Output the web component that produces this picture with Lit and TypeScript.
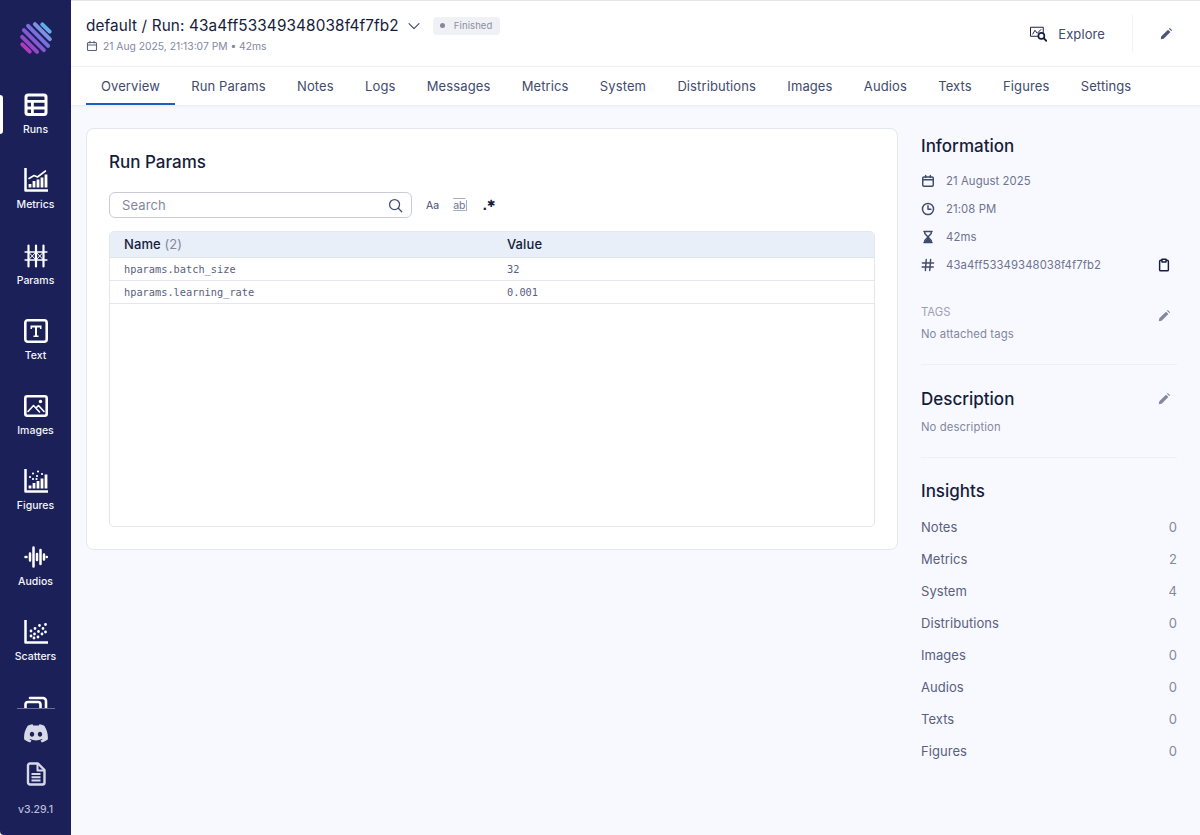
import { LitElement, html, css, svg } from "lit";
import { customElement } from "lit/decorators.js";

const I = (c: unknown, s = 24, vb = "0 0 24 24", cls = "") =>
  html`<svg class=${cls} width=${s} height=${s} viewBox=${vb} fill="none" stroke="currentColor" stroke-width="2" stroke-linecap="round" stroke-linejoin="round">${c}</svg>`;

const icons = {
  runs: svg`<rect x="0.5" y="0.5" width="23" height="22.500" rx="3.500" fill="currentColor" stroke="none"/><path d="M3.500 7h17V4.300a.8.8 0 0 0-.8-.8H4.300a.8.8 0 0 0-.8.8z M3.500 9.800h3.500v3.800H3.500z M9.800 9.800h10.700v3.800H9.800z M3.500 16.400h3.500v3.600H4.300a.8.8 0 0 1-.8-.8z M9.800 16.400h10.700v2.800a.8.8 0 0 1-.8.8H9.800z" fill="#1b2059" stroke="none"/>`,
  metrics: svg`<path d="M1.500 1v21.500H23.500" stroke-width="2.500" stroke-linecap="square"/><path d="M6 19.500V16M10 19.500V13M14 19.500V11.500M18 19.500V9.500M22 19.500V6.500" stroke-width="2.800" stroke-linecap="butt"/><path d="M5 10.500l5-3 3.500 1.500 8-6" stroke-width="1.600"/>`,
  params: svg`<path d="M4.500 1.500v21M12 1.500v21M19.500 1.500v21" stroke-width="2.200"/><path d="M1 8h22M1 16h22" stroke-width="1.300"/><path d="M4.500 8l7.500 8 7.500-8M4.500 16l7.500-8 7.500 8" stroke-width="1"/>`,
  text: svg`<rect x="1.300" y="1.300" width="21.400" height="21.400" rx="2.500" stroke-width="2.600"/><path d="M6.500 6.500h11v3.500h-1.500V8.500h-3v8h1.500V18h-5v-1.500h1.500v-8H8v1.500H6.500z" fill="currentColor" stroke="none"/>`,
  images: svg`<rect x="1.300" y="2.300" width="21.400" height="19.400" rx="2" stroke-width="2.600"/><circle cx="16.500" cy="7.500" r="1.700" fill="currentColor" stroke="none"/><path d="M4 17.500l5.500-6L15.500 18M12 14l2.500-2.500 5.500 6" stroke-width="1.600"/>`,
  figures: svg`<path d="M1.500 1v21.500H23.500" stroke-width="2.500" stroke-linecap="square"/><path d="M6 19.500V16.500M10 19.500V14M14 19.500V12M18 19.500V9.500M22 19.500V5.500" stroke-width="2.800" stroke-linecap="butt"/><path d="M6 8h.01M9 4.500h.01M9 10h.01M13 7h.01M14 2.500h.01M18 5h.01M12.500 10h.01" stroke-width="2.200"/>`,
  audios: svg`<path d="M1.500 12h1M6 8.500v7M9.500 2.500v19M13 9v6M16.500 5v14M20 9.500v5M22.800 12h.01" stroke-width="2.500"/>`,
  scatters: svg`<path d="M1.500 1v21.500H23.500" stroke-width="2.500" stroke-linecap="square"/><path d="M7 16h.01M7 11h.01M10.500 14h.01M11 8.500h.01M14 17h.01M14.500 11.500h.01M15.500 5.500h.01M18 14h.01M19 8.500h.01M21.500 4.500h.01M10 18h.01M21.500 12h.01" stroke-width="2.800"/>`,
  stack: svg`<rect x="1.500" y="7" width="15" height="15" rx="2.500" stroke-width="2.600"/><path d="M6 3h13a3 3 0 0 1 3 3v12" stroke-width="2.600"/>`,
  cal: svg`<rect x="3" y="5" width="18" height="16" rx="2"/><path d="M3 10h18M8 2.500V6M16 2.500V6"/>`,
  clock: svg`<circle cx="12" cy="12" r="9.500"/><path d="M12 6.500V12.500H17"/>`,
  glass: svg`<path d="M5 2.500h14M5 21.500h14M6.500 2.500v3.500L12 12l5.500-6V2.500M6.500 21.500V18L12 12l5.500 6v3.500"/><path d="M8 19.500l4-4 4 4z" fill="currentColor"/>`,
  hash: svg`<path d="M9 2.500L7.500 21.500M16.500 2.500L15 21.500M2.500 8.500h19M2 15.500h19"/>`,
  clip: svg`<rect x="4.500" y="4" width="15" height="18" rx="2"/><path d="M8.500 2h7v5h-7z" fill="#f8f9fe"/>`,
  pen: svg`<path d="M3 21l1-5L15.500 4.500l4 4L8 20z M17 3l1.500-1.500 4 4L21 7z" fill="currentColor" stroke="none"/>`,
  search: svg`<circle cx="10.500" cy="10.500" r="8"/><path d="M16.500 16.500L22 22"/>`,
  chev: svg`<path d="M3.500 8l8.500 8.500L20.500 8"/>`,
  doc: svg`<path d="M6 1.500h8l6.500 6.500v12.500a2 2 0 0 1-2 2H6a2 2 0 0 1-2-2V3.500a2 2 0 0 1 2-2z" stroke-width="2.400"/><path d="M13.500 2V8.500H20" stroke-width="2"/><path d="M7.500 12h9M7.500 15.200h9M7.500 18.400h9" stroke-width="2" stroke-linecap="butt"/>`,
  discord: svg`<path d="M20.300 4.800A19.600 19.600 0 0 0 15.400 3.300l-.6 1.300a18 18 0 0 0-5.600 0l-.6-1.300a19.600 19.600 0 0 0-4.900 1.500C.6 9.500-.3 14 .2 18.500a19.800 19.800 0 0 0 6 3l1.300-2.100-2-1 .5-.4a14 14 0 0 0 12 0l.5.400-2 1 1.300 2.100a19.800 19.800 0 0 0 6-3c.5-5.200-.9-9.700-3.500-13.700zM8 15.800c-1.200 0-2.200-1.100-2.200-2.500S6.800 10.800 8 10.800s2.200 1.100 2.200 2.500-1 2.500-2.200 2.500zm8 0c-1.200 0-2.200-1.100-2.200-2.500s1-2.500 2.200-2.500 2.200 1.100 2.200 2.500-1 2.500-2.200 2.500z" fill="currentColor" stroke="none"/>`,
  explore: svg`<path d="M14 15H2V3h17v7" stroke-width="1.300"/><path d="M5 12l3-5 3 4 5-5" stroke-width="1.300"/><circle cx="16.500" cy="14.500" r="4" stroke-width="2.200" fill="#fff"/><path d="M19.500 17.500l3.500 3.500" stroke-width="2.400"/>`,
};

const navItems: [string, keyof typeof icons][] = [
  ["Runs", "runs"], ["Metrics", "metrics"], ["Params", "params"], ["Text", "text"],
  ["Images", "images"], ["Figures", "figures"], ["Audios", "audios"], ["Scatters", "scatters"], ["", "stack"],
];
const tabs = ["Overview", "Run Params", "Notes", "Logs", "Messages", "Metrics", "System", "Distributions", "Images", "Audios", "Texts", "Figures", "Settings"];
const insights: [string, number][] = [["Notes", 0], ["Metrics", 2], ["System", 4], ["Distributions", 0], ["Images", 0], ["Audios", 0], ["Texts", 0], ["Figures", 0]];

@customElement("app-root")
export class AppRoot extends LitElement {
  static styles = css`
    :host { display: block; width: 1200px; height: 835px; overflow: hidden; font-family: Inter, "Noto Sans", sans-serif; background: #fff; color: #414b6d; }
    * { box-sizing: border-box; }
    .shell { display: flex; height: 835px; }
    .side { width: 71px; flex: none; background: #1b2059; color: #fff; display: flex; flex-direction: column; align-items: center; border-bottom-left-radius: 4px; }
    .logo { height: 66px; padding-top: 20px; flex: none; }
    .nav { width: 100%; height: 642px; flex: none; overflow: hidden; }
    .item { height: 75.300px; position: relative; display: flex; flex-direction: column; align-items: center; padding-top: 27px; gap: 6px; }
    .item span { font-size: 10.500px; font-weight: 500; line-height: 13px; color: #f4f5fa; }
    .item.active::before { content: ""; position: absolute; left: 0; top: 28.500px; width: 3px; height: 39px; background: #fff; border-radius: 0 3px 3px 0; }
    .line { width: 38px; height: 1px; background: #6a6f99; flex: none; }
    .bottom { display: flex; flex-direction: column; align-items: center; color: #d7d9e8; }
    .discord { margin-top: 12px; height: 24px; }
    .docicon { margin-top: 17px; height: 24px; }
    .ver { margin-top: 17px; font-size: 10.500px; font-weight: 500; color: #b9bdd6; line-height: 13px; }
    .main { flex: 1; min-width: 0; display: flex; flex-direction: column; background: #f8f9fe; }
    .head { height: 67px; flex: none; background: #fff; border-top: 1px solid #e4e5e9; border-bottom: 1px solid #f1f3f8; display: flex; justify-content: space-between; padding: 0 27px 0 15px; }
    .title { padding-top: 14px; }
    .tline { display: flex; align-items: center; font-size: 15.300px; line-height: 21px; color: #161c3c; letter-spacing: 0.13px; white-space: pre; }
    .tline svg { margin-left: 8px; color: #414b6d; }
    .badge { margin-left: 12px; height: 18px; display: flex; align-items: center; gap: 9px; padding: 0 8px 0 7px; background: #f0f1f5; border-radius: 4px; font-size: 9.500px; color: #8a8fa6; letter-spacing: 0.1px; }
    .badge i { width: 5px; height: 5px; background: #83889f; border-radius: 50%; }
    .sub { display: flex; align-items: center; gap: 5px; margin-top: 3px; font-size: 10.300px; line-height: 14px; color: #83889f; }
    .sub svg { stroke-width: 2.200; color: #596080; }
    .actions { display: flex; align-items: center; }
    .explore { display: flex; align-items: center; gap: 11px; font-size: 13px; letter-spacing: 0.1px; color: #414b6d; padding-right: 27px; }
    .explore svg { color: #161c3c; }
    .pen { height: 37px; border-left: 1px solid #f1f3f8; padding-left: 26px; display: flex; align-items: center; color: #4c5573; }
    .tabs { height: 38px; flex: none; background: #fff; display: flex; gap: 1.350px; padding-left: 15px; box-shadow: 0 1px 3px rgba(30,40,90,.08); }
    .tab { padding: 0 15px; font-size: 13px; letter-spacing: 0.1px; line-height: 38px; color: #414b6d; height: 38px; border-bottom: 2px solid transparent; }
    .tab.active { border-bottom-color: #1c5fc4; }
    .body { flex: 1; display: flex; padding: 23px 23px 0 15px; gap: 23px; align-items: flex-start; }
    .card { width: 812px; height: 422px; flex: none; background: #fff; border: 1px solid #e4e7f0; border-radius: 8px; padding: 21px 22px 22px; display: flex; flex-direction: column; }
    h2 { margin: 0; font-weight: 500; font-size: 17px; line-height: 24px; color: #161c3c; }
    .tools { display: flex; align-items: center; margin-top: 18px; }
    .search { width: 303px; height: 26px; border: 1px solid #c9ccd6; border-radius: 6px; display: flex; align-items: center; justify-content: space-between; padding: 0 8px 0 12px; font-size: 13px; letter-spacing: 0.1px; color: #83889f; }
    .search svg { color: #414b6d; }
    .opts { display: flex; align-items: center; color: #414b6d; margin-left: 14px; gap: 13px; font-size: 10.500px; }
    .ab { font-size: 10.500px; color: #6d7390; text-decoration: underline overline; text-decoration-color: #a9adbf; border-right: 1px solid #a9adbf; line-height: 11px; padding: 0 1px; }
    .re { display: flex; align-items: flex-end; height: 12px; color: #161c3c; margin-left: 2px; font-family: "DejaVu Sans", sans-serif; }
    .re b { font-size: 12px; line-height: 10px; }
    .re i { font-style: normal; font-size: 10px; line-height: 15px; margin-left: 0; }
    .table { flex: 1; margin-top: 13px; border: 1px solid #e4e7f0; border-radius: 5px; overflow: hidden; }
    .row { display: grid; grid-template-columns: 383px 1fr; padding: 0 0 1px 14px; height: 23px; align-items: center; border-bottom: 1px solid #e4e7f0; font-family: "DejaVu Sans Mono", monospace; font-size: 10.300px; color: #596080; }
    .row.h { height: 26px; background: #e8eff8; font-family: Inter, sans-serif; font-size: 13px; font-weight: 500; letter-spacing: 0.1px; color: #161c3c; border-bottom: 1px solid #dfe3ec; }
    .row.h em { font-style: normal; font-weight: 400; color: #83889f; }
    .info { width: 256px; flex: none; margin-top: 7px; }
    .info h2 { line-height: 22px; margin-top: 0; }
    .meta { display: flex; align-items: center; gap: 11px; height: 28px; font-size: 11.300px; letter-spacing: 0.1px; color: #6d7390; }
    .meta svg { width: 14px; height: 14px; stroke-width: 2.500; color: #414b6d; flex: none; }
    .meta .clip { margin-left: 45px; display: flex; }
    .meta .clip svg { color: #161c3c; }
    .metas { margin-top: 10px; }
    .split { display: flex; justify-content: space-between; align-items: center; }
    .split svg { color: #83889f; margin-right: 6px; }
    .tags { margin-top: 26px; align-items: flex-start; font-size: 11.300px; line-height: 14px; color: #9ca0b4; }
    .tags svg { margin-top: 4px; }
    .note { font-size: 11.300px; line-height: 14px; color: #83889f; letter-spacing: 0.1px; margin-top: 4px; }
    .note.d { margin-top: 10px; }
    .rule { height: 1px; background: #eef0f6; margin: 23px 0 23px; }
    .rule.r2 { margin-bottom: 22px; }
    .ins { display: flex; justify-content: space-between; height: 32px; align-items: center; font-size: 13px; letter-spacing: 0.05px; color: #596080; }
    .ins b { font-weight: 400; color: #83889f; }
    .insl { margin-top: 9px; }
  `;

  render() {
    return html`<div class="shell">
      <aside class="side">
        <div class="logo">
          <svg width="36" height="36" viewBox="0 0 36 36" fill="none" stroke-linecap="round" stroke-width="4">
            <path d="M24.300 4.300L31.700 11.700" stroke="#62ade8"/>
            <path d="M16.900 4.100L31.900 19.100" stroke="#7f90e2"/>
            <path d="M10.100 5.900L30.100 25.900" stroke="#7870de"/>
            <path d="M5.900 10.100L25.900 30.100" stroke="#8359d4"/>
            <path d="M4.100 16.900L19.100 31.900" stroke="#9348c8"/>
            <path d="M4.300 24.300L11.700 31.700" stroke="#b03abd"/>
          </svg>
        </div>
        <nav class="nav">
          ${navItems.map(([n, ic], i) => html`<div class="item ${i === 0 ? "active" : ""}">${I(icons[ic])}${n ? html`<span>${n}</span>` : ""}</div>`)}
        </nav>
        <div class="line"></div>
        <div class="bottom">
          <div class="discord">${I(icons.discord, 24)}</div>
          <div class="docicon">${I(icons.doc, 24)}</div>
          <div class="ver">v3.29.1</div>
        </div>
      </aside>
      <div class="main">
        <header class="head">
          <div class="title">
            <div class="tline">default / Run: 43a4ff53349348038f4f7fb2${I(icons.chev, 14)}<div class="badge"><i></i>Finished</div></div>
            <div class="sub">${I(icons.cal, 12)}21 Aug 2025, 21:13:07 PM • 42ms</div>
          </div>
          <div class="actions">
            <div class="explore">${I(icons.explore, 18)}Explore</div>
            <div class="pen">${I(icons.pen, 14)}</div>
          </div>
        </header>
        <div class="tabs">${tabs.map((t, i) => html`<div class="tab ${i === 0 ? "active" : ""}">${t}</div>`)}</div>
        <div class="body">
          <section class="card">
            <h2>Run Params</h2>
            <div class="tools">
              <div class="search">Search${I(icons.search, 15)}</div>
              <div class="opts"><span>Aa</span><span class="ab">ab</span><span class="re"><b>.</b><i>✱</i></span></div>
            </div>
            <div class="table">
              <div class="row h"><div>Name <em>(2)</em></div><div>Value</div></div>
              <div class="row"><div>hparams.batch_size</div><div>32</div></div>
              <div class="row"><div>hparams.learning_rate</div><div>0.001</div></div>
            </div>
          </section>
          <aside class="info">
            <h2>Information</h2>
            <div class="metas">
              <div class="meta">${I(icons.cal)}21 August 2025</div>
              <div class="meta">${I(icons.clock)}21:08 PM</div>
              <div class="meta">${I(icons.glass)}42ms</div>
              <div class="meta">${I(icons.hash)}43a4ff53349348038f4f7fb2<span class="clip">${I(icons.clip)}</span></div>
            </div>
            <div class="split tags"><span>TAGS</span>${I(icons.pen, 14)}</div>
            <div class="note">No attached tags</div>
            <div class="rule"></div>
            <div class="split"><h2>Description</h2>${I(icons.pen, 14)}</div>
            <div class="note d">No description</div>
            <div class="rule r2"></div>
            <h2>Insights</h2>
            <div class="insl">${insights.map(([k, v]) => html`<div class="ins"><span>${k}</span><b>${v}</b></div>`)}</div>
          </aside>
        </div>
      </div>
    </div>`;
  }
}
